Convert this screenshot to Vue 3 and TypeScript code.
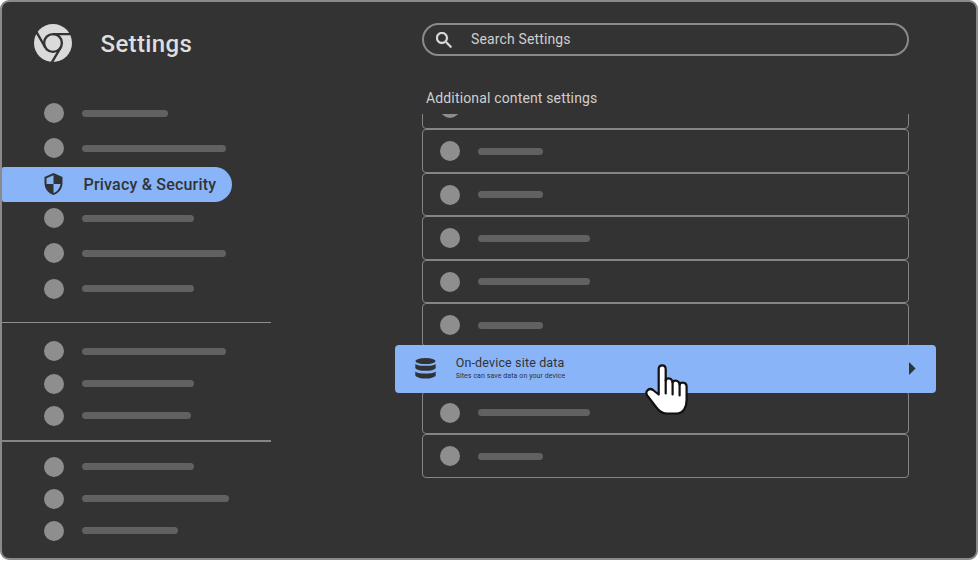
<script setup lang="ts">
interface NavItem {
  width: number
  label?: string
}

interface SiteRow {
  width: number
  title?: string
  note?: string
}

const navGroups: NavItem[][] = [
  [
    { width: 86 },
    { width: 144 },
    { width: 0, label: 'Privacy & Security' },
    { width: 112.5 },
    { width: 144 },
    { width: 112.5 },
  ],
  [{ width: 144 }, { width: 112.5 }, { width: 109.5 }],
  [{ width: 112.5 }, { width: 147 }, { width: 96 }],
]

const rows: SiteRow[] = [
  { width: 65.5 },
  { width: 65.5 },
  { width: 65.5 },
  { width: 112.5 },
  { width: 112.5 },
  { width: 65.5 },
  { width: 0, title: 'On-device site data', note: 'Sites can save data on your device' },
  { width: 112.5 },
  { width: 65.5 },
]
</script>

<template>
  <div class="window">
    <aside class="sidebar">
      <header class="brand">
        <svg class="logo" viewBox="0 0 38 38">
          <circle cx="19" cy="19" r="19" fill="#dadada" />
          <g fill="none" stroke="#333" stroke-width="2.4">
            <circle cx="19" cy="19" r="8.9" />
            <path d="M19 10.1H36M11.3 23.5L2.4 7.8M26.7 23.5L17.2 39.5" />
          </g>
        </svg>
        <h1 class="title">Settings</h1>
      </header>
      <nav>
        <ul v-for="(group, g) in navGroups" :key="g" class="group">
          <li v-for="(item, i) in group" :key="i" class="nav-item" :class="{ active: item.label }">
            <template v-if="item.label">
              <svg class="shield" viewBox="3 1 18 22">
                <path
                  fill="#303336"
                  d="M12 1L3 5v6c0 5.55 3.84 10.74 9 12 5.16-1.26 9-6.45 9-12V5l-9-4zm0 10.99h7c-.53 4.12-3.28 7.79-7 8.94V12H5V6.3l7-3.11v8.8z"
                />
              </svg>
              <span class="nav-label">{{ item.label }}</span>
            </template>
            <template v-else>
              <span class="dot" />
              <span class="bar" :style="{ width: item.width + 'px' }" />
            </template>
          </li>
        </ul>
      </nav>
    </aside>

    <main class="content">
      <div class="search">
        <svg class="lens" viewBox="3 3 17.5 17.5">
          <path
            fill="#dedede"
            stroke="#dedede"
            stroke-width=".4"
            d="M15.5 14h-.79l-.28-.27C15.41 12.59 16 11.11 16 9.5 16 5.91 13.09 3 9.5 3S3 5.91 3 9.5 5.91 16 9.5 16c1.61 0 3.09-.59 4.23-1.57l.27.28v.79l5 4.99L20.49 19l-4.99-5zm-6 0C7.01 14 5 11.99 5 9.5S7.01 5 9.5 5 14 7.01 14 9.5 11.99 14 9.5 14z"
          />
        </svg>
        <span class="placeholder">Search Settings</span>
      </div>
      <h2 class="heading">Additional content settings</h2>
      <div class="scroller">
        <ul class="list">
          <li v-for="(row, i) in rows" :key="i" class="row" :class="{ selected: row.title }">
            <template v-if="row.title">
              <svg class="database" viewBox="0 0 21 21">
                <g fill="#303336">
                  <ellipse cx="10.5" cy="3.1" rx="10.1" ry="3" />
                  <path d="M.3 5.9C3 8.5 18 8.5 20.7 5.9V10C18.5 13.8 2.5 13.8.3 10Z" />
                  <path d="M.3 13.4C3 16.3 18 16.3 20.7 13.4V17.5C18.5 21.6 2.5 21.6.3 17.5Z" />
                </g>
              </svg>
              <span class="texts">
                <span class="row-title">{{ row.title }}</span>
                <span class="row-note">{{ row.note }}</span>
              </span>
              <svg class="arrow" viewBox="0 0 7 13"><path fill="#303336" d="M0 0L6.6 6.5L0 13Z" /></svg>
            </template>
            <template v-else>
              <span class="dot" />
              <span class="bar" :style="{ width: row.width + 'px' }" />
            </template>
          </li>
        </ul>
      </div>
    </main>

    <svg class="pointer" viewBox="0 0 44 52">
      <path
        fill="#fff"
        stroke="#111"
        stroke-width="2.2"
        stroke-linejoin="round"
        d="M13.7 31.5V6.3C13.7 1.1 20.7 1.1 20.7 6.3V17.5C21.8 14.1 27.2 14.9 27.6 19.4C29 16.4 34.2 17.3 34.6 21.5C36 18.5 41.6 19.3 41.6 23.5V37C41.6 44 38.5 50.5 31.5 50.5H21.5C16.5 50.5 13.5 47.5 11 44L2.2 32.3C-.5 28.2 4.3 24.3 8 27Z"
      />
      <path
        fill="none"
        stroke="#111"
        stroke-width="2.2"
        stroke-linecap="round"
        d="M20.7 17V30.5M27.6 19V31.5M34.6 21V32.5"
      />
    </svg>
  </div>
</template>

<style>
body {
  background: #fff;
}
</style>

<style scoped>
.window {
  position: relative;
  box-sizing: border-box;
  display: flex;
  width: 978px;
  height: 560px;
  overflow: hidden;
  border: 2px solid #8a8a8a;
  border-radius: 9px;
  background: #333;
  font-family: Roboto, sans-serif;
}

ul {
  margin: 0;
  padding: 0;
  list-style: none;
}

.sidebar {
  width: 269px;
  flex: none;
}

.brand {
  box-sizing: border-box;
  display: flex;
  height: 93.5px;
  padding: 22px 0 0 32px;
}

.logo {
  width: 38px;
  height: 38px;
}

.title {
  margin: 4px 0 0 28.5px;
  color: #dedede;
  font-size: 24px;
  font-weight: 500;
  letter-spacing: 0.36px;
  line-height: 32px;
}

.group + .group {
  border-top: 1px solid #8e8e8e;
}

.group:nth-child(1) {
  padding-bottom: 15.5px;
}

.group:nth-child(2) {
  padding: 12.7px 0 8.3px;
}

.group:nth-child(3) {
  border-top: 2px solid #858585;
  padding-top: 8.3px;
}

.nav-item {
  display: flex;
  align-items: center;
  box-sizing: border-box;
  height: 32.2px;
  padding-left: 41.5px;
}

.group:nth-child(1) .nav-item {
  height: 35.1px;
}

.dot {
  width: 20px;
  height: 20px;
  flex: none;
  border-radius: 50%;
  background: #8e8e8e;
}

.bar {
  height: 7px;
  margin-left: 18px;
  border-radius: 3.5px;
  background: #616161;
}

.group:nth-child(1) .nav-item.active {
  width: 230.4px;
  height: 35.4px;
  margin: 1px 0 -1.3px;
  border-radius: 2px 18px 18px 2px;
  background: #8ab4f8;
}

.shield {
  width: 19px;
  height: 22px;
}

.nav-label {
  margin-left: 21px;
  color: #303336;
  font-size: 16px;
  font-weight: 500;
  letter-spacing: 0.2px;
  white-space: nowrap;
}

.content {
  width: 487px;
  margin-left: 151px;
}

.search {
  box-sizing: border-box;
  display: flex;
  align-items: center;
  height: 33px;
  margin-top: 21px;
  padding: 0 0 0 12px;
  border: 2px solid #8a8a8a;
  border-radius: 17px;
  color: #cfcfcf;
  font-size: 14px;
  letter-spacing: 0.14px;
}

.lens {
  width: 16px;
  height: 16px;
  margin-right: 19px;
}

.placeholder {
  padding-bottom: 2px;
}

.heading {
  height: 20px;
  margin: 32px 0 6px 4px;
  color: #cfcfcf;
  font-size: 14px;
  font-weight: 400;
  letter-spacing: 0.15px;
  line-height: 20px;
}

.scroller {
  margin: 0 -27px;
  padding: 0 27px;
  overflow: hidden;
}

.list {
  margin-top: -28.2px;
}

.row {
  box-sizing: border-box;
  display: flex;
  align-items: center;
  height: 43.5px;
  padding-left: 16.5px;
  border: 1px solid #858585;
  border-radius: 4px;
}

.row.selected {
  position: relative;
  z-index: 1;
  height: 48px;
  margin: -1.8px -27px -2.2px;
  padding: 0 20px 2px;
  border: 0;
  background: #8ab4f8;
  color: #303336;
}

.database {
  width: 21px;
  height: 21px;
  flex: none;
}

.texts {
  display: flex;
  flex: 1;
  flex-direction: column;
  margin-left: 19.7px;
}

.row-title {
  font-size: 12.5px;
  letter-spacing: 0.15px;
  line-height: 16px;
}

.row-note {
  font-size: 7px;
  letter-spacing: 0.08px;
  line-height: 10px;
}

.arrow {
  width: 7px;
  height: 13px;
}

.pointer {
  position: absolute;
  left: 643px;
  top: 361px;
  z-index: 2;
  width: 44px;
  height: 52px;
}
</style>
